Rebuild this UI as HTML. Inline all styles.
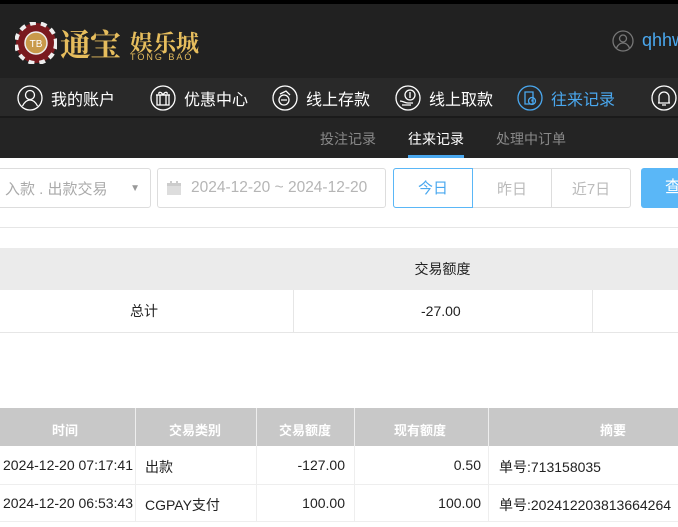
<!DOCTYPE html>
<html><head><meta charset="utf-8"><style>
*{margin:0;padding:0;box-sizing:border-box}
body{width:678px;height:527px;overflow:hidden;background:#fff;font-family:"Liberation Sans","Noto Sans CJK SC",sans-serif;position:relative}
.abs{position:absolute}
.top{left:0;top:0;width:678px;height:4px;background:#000}
.hdr{left:0;top:4px;width:678px;height:74px;background:#212121}
.nav{left:0;top:78px;width:678px;height:40px;background:#292929;border-bottom:2px solid #1a1a1a}
.nav .it{position:absolute;top:7px;height:26px;display:flex;align-items:center;color:#fff;font-size:16px;gap:8px}
.sub{left:0;top:118px;width:678px;height:40px;background:#242424}
.sub span{position:absolute;top:11px;font-size:14px;color:#888}
.fld{border:1px solid #ddd;border-radius:3px;height:40px;top:168px;color:#aaa;font-size:15px;display:flex;align-items:center}
.b{display:flex;align-items:center;justify-content:center;height:38px}
</style></head><body>
<div class="abs top"></div>
<div class="abs hdr">
 <svg class="abs" style="left:15px;top:18px" width="42" height="42" viewBox="0 0 42 42">
  <circle cx="21" cy="21" r="20" fill="#7a1a1f"/>
  <circle cx="21" cy="21" r="20" fill="none" stroke="#eee" stroke-width="4" stroke-dasharray="6 5"/>
  <circle cx="21" cy="21" r="11" fill="#c99a4a" stroke="#eee" stroke-width="1.5"/>
  <text x="21" y="25" font-size="10" fill="#fff" text-anchor="middle" font-family="Liberation Sans">TB</text>
 </svg>
 <div class="abs" style="left:60px;top:16px;font-size:31px;color:#e6bd5d;font-family:'Noto Serif CJK SC',serif;font-weight:bold;letter-spacing:-1px">通宝</div>
 <div class="abs" style="left:130px;top:21px;font-size:23px;color:#e6bd5d;font-family:'Noto Serif CJK SC',serif;font-weight:bold">娱乐城</div>
 <div class="abs" style="left:130px;top:48px;font-size:9px;color:#e6bd5d;letter-spacing:2px">TONG BAO</div>
 <svg class="abs" style="left:612px;top:26px" width="22" height="22" viewBox="0 0 22 22" fill="none" stroke="#777" stroke-width="1.3"><circle cx="11" cy="11" r="10"/><circle cx="11" cy="8.5" r="3.5"/><path d="M4.5 18c1.5-3.5 4-5 6.5-5s5 1.5 6.5 5"/></svg>
 <div class="abs" style="left:642px;top:26px;font-size:18px;color:#4aa8ef">qhhw</div>
</div>
<div class="abs nav">
 <div class="it" style="left:17px"><svg width="26" height="26" viewBox="0 0 26 26" fill="none" stroke="#fff" stroke-width="1.3"><circle cx="13" cy="13" r="12"/><circle cx="13" cy="10" r="4.5"/><path d="M5.5 21c2-4 4.5-6 7.5-6s5.5 2 7.5 6"/></svg>我的账户</div>
 <div class="it" style="left:150px"><svg width="26" height="26" viewBox="0 0 26 26" fill="none" stroke="#fff" stroke-width="1.3"><circle cx="13" cy="13" r="12"/><rect x="7" y="10" width="12" height="10"/><path d="M6 10h14M10 10v10M16 10v10M13 10c-2-4-5-3-4-1M13 10c2-4 5-3 4-1"/></svg>优惠中心</div>
 <div class="it" style="left:272px"><svg width="26" height="26" viewBox="0 0 26 26" fill="none" stroke="#fff" stroke-width="1.3"><circle cx="13" cy="13" r="12"/><circle cx="12" cy="15" r="5"/><path d="M9 15h6M8 9l6-3 4 4"/></svg>线上存款</div>
 <div class="it" style="left:395px"><svg width="26" height="26" viewBox="0 0 26 26" fill="none" stroke="#fff" stroke-width="1.3"><circle cx="13" cy="13" r="12"/><circle cx="15" cy="10" r="5"/><path d="M15 7v6M5 16c3 0 5 2 8 2h5M7 20h9"/></svg>线上取款</div>
 <div class="it" style="left:517px;color:#4aa8ef"><svg width="26" height="26" viewBox="0 0 26 26" fill="none" stroke="#4aa8ef" stroke-width="1.3"><circle cx="13" cy="13" r="12"/><path d="M8 7h8v12H8z"/><circle cx="15" cy="16" r="3.5"/><path d="M15 14.5v1.5h1.5"/></svg>往来记录</div>
 <div class="it" style="left:651px"><svg width="26" height="26" viewBox="0 0 26 26" fill="none" stroke="#fff" stroke-width="1.3"><circle cx="13" cy="13" r="12"/><path d="M8 18V12a5 5 0 0110 0v6H7h12M11 20h4"/></svg></div>
</div>
<div class="abs sub">
 <span style="left:320px">投注记录</span>
 <span style="left:408px;color:#fff">往来记录</span>
 <span style="left:496px">处理中订单</span>
 <div class="abs" style="left:408px;top:37px;width:56px;height:3px;background:#4aa8ef"></div>
</div>
<div class="abs fld" style="left:-20px;width:171px;padding-left:24px">入款 . 出款交易<span style="position:absolute;right:10px;font-size:10px;color:#999">▼</span></div>
<div class="abs fld" style="left:157px;width:229px;padding-left:8px"><svg width="16" height="16" viewBox="0 0 16 16"><rect x="1" y="3" width="14" height="12" fill="#ddd"/><rect x="1" y="3" width="14" height="3" fill="#ccc"/><rect x="4" y="1" width="2" height="4" fill="#ccc"/><rect x="10" y="1" width="2" height="4" fill="#ccc"/></svg><span style="margin-left:9px;font-size:15.5px;color:#b5b5b5">2024-12-20 ~ 2024-12-20</span></div>
<div class="abs fld" style="left:393px;width:238px;padding:0">
 <div style="width:80px;height:40px;margin:-1px 0 0 -1px;border:1px solid #5ab7f7;border-radius:3px 0 0 3px;color:#4aa8ef;display:flex;align-items:center;justify-content:center">今日</div>
 <div class="b" style="width:79px;border-right:1px solid #ddd;color:#bbb">昨日</div>
 <div class="b" style="flex:1;color:#bbb">近7日</div>
</div>
<div class="abs" style="left:641px;top:168px;width:60px;height:40px;background:#5ab7f7;border-radius:3px;color:#fff;font-size:16px;line-height:40px;padding-left:24px">查</div>
<div class="abs" style="left:0;top:227px;width:678px;height:1px;background:#e6e6e6"></div>
<div class="abs" style="left:0;top:248px;width:678px;height:42px;background:#ebebeb;font-size:14px;color:#222;text-align:center;line-height:42px;padding-left:207px">交易额度</div>
<div class="abs" style="left:0;top:290px;width:678px;height:43px;border-bottom:1px solid #e6e6e6;font-size:14px;color:#222;line-height:43px">
 <span class="abs" style="left:130px">总计</span>
 <div class="abs" style="left:293px;top:0;width:1px;height:42px;background:#e6e6e6"></div>
 <span class="abs" style="left:421px">-27.00</span>
 <div class="abs" style="left:592px;top:0;width:1px;height:42px;background:#e6e6e6"></div>
</div>
<div class="abs" style="left:0;top:408px;width:678px;height:38px;background:#c8c8c8"></div>
<div class="abs" style="left:0;top:408px;width:678px;height:114px;font-size:14px">
 <div class="abs" style="left:135px;top:0;width:1px;height:114px;background:#eee"></div>
 <div class="abs" style="left:256px;top:0;width:1px;height:114px;background:#eee"></div>
 <div class="abs" style="left:354px;top:0;width:1px;height:114px;background:#eee"></div>
 <div class="abs" style="left:488px;top:0;width:1px;height:114px;background:#eee"></div>
 <div class="abs" style="left:0;top:76px;width:678px;height:1px;background:#eee"></div>
 <div class="abs" style="left:0;top:113px;width:678px;height:1px;background:#eee"></div>
 <div style="color:#fff;font-weight:bold;font-size:13px">
  <span class="abs" style="left:52px;top:12px">时间</span>
  <span class="abs" style="left:169px;top:12px">交易类别</span>
  <span class="abs" style="left:279px;top:12px">交易额度</span>
  <span class="abs" style="left:394px;top:12px">现有额度</span>
  <span class="abs" style="left:600px;top:12px">摘要</span>
 </div>
 <div style="color:#222">
  <span class="abs" style="left:3px;top:49px">2024-12-20 07:17:41</span>
  <span class="abs" style="left:145px;top:49px">出款</span>
  <span class="abs" style="right:333px;top:49px">-127.00</span>
  <span class="abs" style="right:197px;top:49px">0.50</span>
  <span class="abs" style="left:499px;top:49px">单号:713158035</span>
  <span class="abs" style="left:3px;top:87px">2024-12-20 06:53:43</span>
  <span class="abs" style="left:145px;top:87px">CGPAY支付</span>
  <span class="abs" style="right:333px;top:87px">100.00</span>
  <span class="abs" style="right:197px;top:87px">100.00</span>
  <span class="abs" style="left:499px;top:87px">单号:202412203813664264</span>
 </div>
</div>
</body></html>
